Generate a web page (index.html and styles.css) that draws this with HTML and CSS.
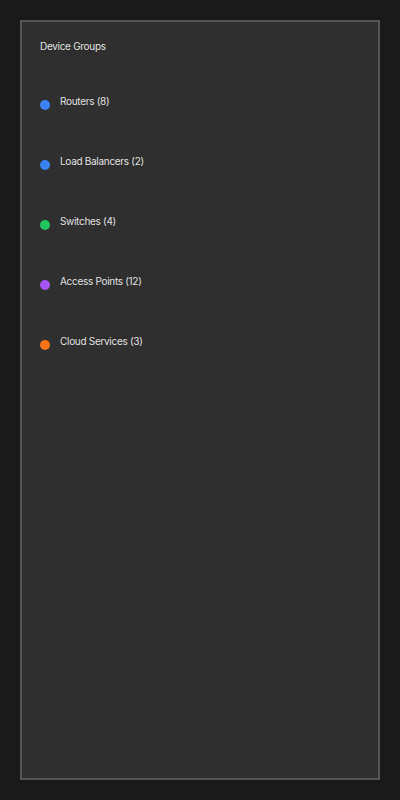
FILE: index.html
```html
<!DOCTYPE html>
<html lang="en">
<head>
<meta charset="utf-8">
<title>Device Groups</title>
<link rel="stylesheet" href="styles.css">
</head>
<body>
<div class="panel">
  <div class="title">Device Groups</div>
  <ul class="groups">
    <li class="group"><span class="dot blue"></span><span class="label">Routers (8)</span></li>
    <li class="group"><span class="dot blue"></span><span class="label">Load Balancers (2)</span></li>
    <li class="group"><span class="dot green"></span><span class="label">Switches (4)</span></li>
    <li class="group"><span class="dot purple"></span><span class="label">Access Points (12)</span></li>
    <li class="group"><span class="dot orange"></span><span class="label">Cloud Services (3)</span></li>
  </ul>
</div>
</body>
</html>
```
FILE: styles.css
```css
html, body {
  margin: 0;
  padding: 0;
  background: #1a1a1a;
  width: 400px;
  height: 800px;
}
body {
  padding: 20px;
  box-sizing: border-box;
  font-family: Inter, "Noto Sans", sans-serif;
  color: #e0e0e0;
}
.panel {
  box-sizing: border-box;
  width: 360px;
  height: 760px;
  background: #2f2f2f;
  border: 2px solid #555555;
  padding: 18px 18px;
}
.title {
  font-size: 10px;
  line-height: 12px;
  letter-spacing: -0.3px;
}
.groups {
  list-style: none;
  margin: 43px 0 0 0;
  padding: 0;
  display: flex;
  flex-direction: column;
  gap: 45px;
}
.group {
  display: flex;
  align-items: flex-start;
  gap: 10px;
  height: 15px;
}
.dot {
  width: 10px;
  height: 10px;
  border-radius: 50%;
  margin-top: 5px;
  flex: none;
}
.label {
  font-size: 10px;
  line-height: 12px;
  letter-spacing: -0.3px;
}
.blue { background: #3b82f6; }
.green { background: #22c55e; }
.purple { background: #a855f7; }
.orange { background: #f97316; }
```
